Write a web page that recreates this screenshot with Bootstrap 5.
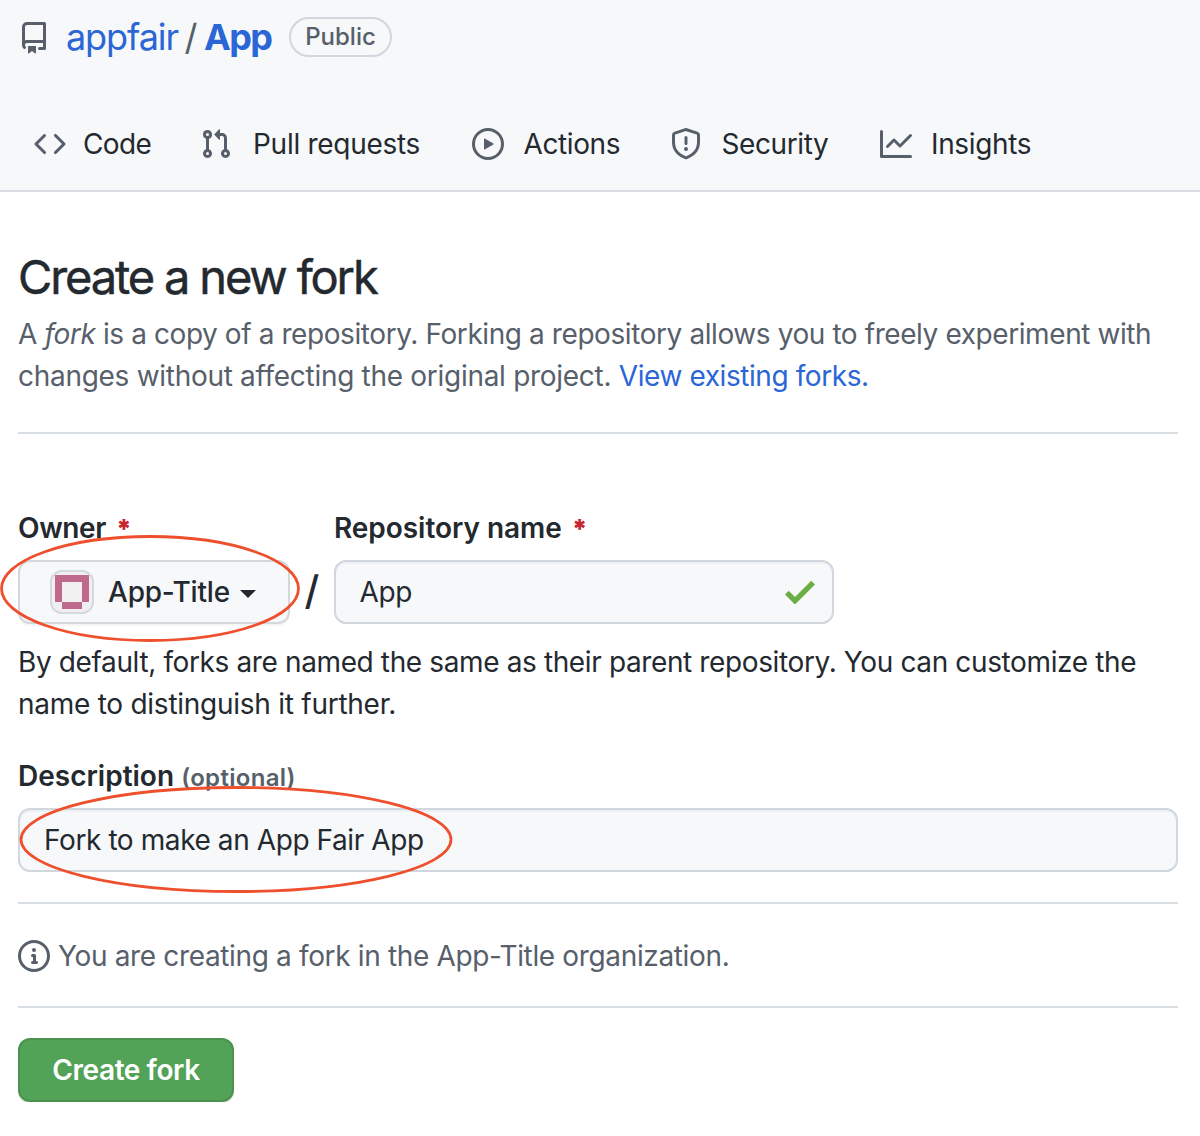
<!DOCTYPE html>
<html lang="en">
<head>
<meta charset="utf-8">
<meta name="viewport" content="width=device-width, initial-scale=1">
<title>Create a new fork</title>
<link href="https://cdn.jsdelivr.net/npm/bootstrap@5.3.0/dist/css/bootstrap.min.css" rel="stylesheet">
<style>
body{font-family:Inter,"Liberation Sans",sans-serif;font-size:28px;line-height:42px;color:#24292f;background:#fff;overflow-x:hidden}
a{color:#2b66d6;text-decoration:none}
svg{display:block;flex:none}
.oct{width:32px;height:32px;fill:#57606a}
.soft{color:#57606a}
.nw{white-space:nowrap}
.repo-head{height:192px;background:#f6f8fa;border-bottom:2px solid #d8dee4}
.repo-title{padding:13px 18px 0;height:61px;font-size:36px;line-height:46px}
.repo-title .oct{margin-top:1px}
.repo-owner{margin-left:16px;width:112px;letter-spacing:-1.1px}
.repo-slash{width:26px;text-align:center}
.repo-name{width:69px;letter-spacing:-1.7px}
.pill{width:103px;height:40px;border:2px solid #d0d7de;border-radius:20px;margin-left:16px;font-size:24px;line-height:35px;font-weight:500}
.tabs{margin-top:62px;height:42px;padding-left:34px}
.tab-item{color:#24292f;gap:17px;letter-spacing:-.4px}
.t1{width:166px;letter-spacing:-.6px}
.t2{width:272px;gap:21px;letter-spacing:-.28px}
.t3{width:198px;gap:19.5px}
.t4{width:210px;gap:19.5px}
.t5{gap:19px;letter-spacing:-.35px}
.main-col{padding:49px 22px 0 18px}
.page-title{font-size:47px;line-height:72px;font-weight:400;letter-spacing:-2.15px;margin:0;-webkit-text-stroke:.5px #24292f}
.rule{height:2px;background:#d8dee4}
.lbl{font-weight:600;height:42px}
.req{color:#c7252f;margin-left:10px;font-weight:900;font-size:26px;letter-spacing:0}
.l1{letter-spacing:-.35px}
.l2{letter-spacing:-.05px}
.opt{font-size:24px;letter-spacing:.3px}
.p1{letter-spacing:-.415px}
.p2{letter-spacing:-.29px}
.p2 a{letter-spacing:-.42px}
.p3{letter-spacing:-.375px}
.p4{letter-spacing:-.26px}
.dt{letter-spacing:-.41px}
.it{margin-left:8px;letter-spacing:-.35px}
.at{letter-spacing:-.4px}
.ot{margin-left:14px;letter-spacing:-.2px}
.field{height:64px;border:2px solid #d0d7de;border-radius:12px;background:#f6f8fa}
.owner-btn{width:272px;padding-left:30px;font-weight:500;border-color:#d5d8da;box-shadow:0 2px 0 rgba(27,31,36,.04)}
.name-field{width:500px;padding:0 17px 0 23.5px;box-shadow:inset 0 2px 0 rgba(208,215,222,.2)}
.desc-field{padding-left:24px;box-shadow:inset 0 2px 0 rgba(208,215,222,.2)}
.sep{width:44px;height:64px;font-size:40px;line-height:61px;font-weight:500}
.caret{border:8px solid transparent;border-top-color:#24292f;border-bottom:0;margin-left:10px;margin-top:3px}
.go{width:216px;height:64px;padding:0;background:#52a257;border:2px solid #4a934f;border-radius:12px;color:#fff;font-size:28px;line-height:42px;font-weight:600;letter-spacing:-.42px;box-shadow:0 2px 0 rgba(27,31,36,.1)}
.ring{position:absolute;pointer-events:none;fill:none;stroke:#ee502e;stroke-width:2.8}
.ring-owner{left:0;top:534px}
.ring-desc{left:18px;top:785px}
</style>
<script src="https://cdn.jsdelivr.net/npm/bootstrap@5.3.0/dist/js/bootstrap.bundle.min.js"></script>
</head>
<body class="position-relative">
<header class="repo-head">
  <div class="repo-title d-flex align-items-center nw">
    <svg class="oct" viewBox="0 0 16 16"><path fill-rule="evenodd" d="M2 2.5A2.5 2.5 0 014.5 0h8.75a.75.75 0 01.75.75v12.5a.75.75 0 01-.75.75h-2.5a.75.75 0 110-1.5h1.75v-2h-8a1 1 0 00-.714 1.7.75.75 0 01-1.072 1.05A2.495 2.495 0 012 11.5v-9zm10.5-1V9h-8c-.356 0-.694.074-1 .208V2.5a1 1 0 011-1h8zM5 12.25v3.25a.25.25 0 00.4.2l1.45-1.087a.25.25 0 01.3 0L8.6 15.7a.25.25 0 00.4-.2v-3.25a.25.25 0 00-.25-.25h-3.5a.25.25 0 00-.25.25z"/></svg>
    <a href="#" class="repo-owner">appfair</a><span class="repo-slash soft">/</span><a href="#" class="repo-name fw-bold">App</a>
    <span class="pill soft text-center">Public</span>
  </div>
  <nav class="tabs d-flex align-items-center nw">
    <a href="#" class="tab-item t1 d-flex align-items-center"><svg class="oct" viewBox="0 0 16 16"><path fill-rule="evenodd" d="M4.72 3.22a.75.75 0 011.06 1.06L2.06 8l3.72 3.72a.75.75 0 11-1.06 1.06L.47 8.53a.75.75 0 010-1.06l4.25-4.25zm6.56 0a.75.75 0 10-1.06 1.06L13.94 8l-3.72 3.72a.75.75 0 101.06 1.06l4.25-4.25a.75.75 0 000-1.06l-4.25-4.25z"/></svg><span>Code</span></a>
    <a href="#" class="tab-item t2 d-flex align-items-center"><svg class="oct" viewBox="0 0 16 16"><path fill-rule="evenodd" d="M7.177 3.073L9.573.677A.25.25 0 0110 .854v4.792a.25.25 0 01-.427.177L7.177 3.427a.25.25 0 010-.354zM3.75 2.5a.75.75 0 100 1.5.75.75 0 000-1.5zm-2.25.75a2.25 2.25 0 113 2.122v5.256a2.251 2.251 0 11-1.5 0V5.372A2.25 2.25 0 011.5 3.25zM11 2.5h-1V4h1a1 1 0 011 1v5.628a2.251 2.251 0 101.5 0V5A2.5 2.5 0 0011 2.5zm1 10.25a.75.75 0 111.5 0 .75.75 0 01-1.5 0zM3.75 12a.75.75 0 100 1.5.75.75 0 000-1.5z"/></svg><span>Pull requests</span></a>
    <a href="#" class="tab-item t3 d-flex align-items-center"><svg class="oct" viewBox="0 0 16 16"><path fill-rule="evenodd" d="M1.5 8a6.5 6.5 0 1113 0 6.5 6.5 0 01-13 0zM8 0a8 8 0 100 16A8 8 0 008 0zM6.379 5.227A.25.25 0 006 5.442v5.117a.25.25 0 00.379.214l4.264-2.559a.25.25 0 000-.428L6.379 5.227z"/></svg><span>Actions</span></a>
    <a href="#" class="tab-item t4 d-flex align-items-center"><svg class="oct" viewBox="0 0 16 16"><path fill-rule="evenodd" d="M7.467.133a1.75 1.75 0 011.066 0l5.25 1.68A1.75 1.75 0 0115 3.48V7c0 1.566-.32 3.182-1.303 4.682-.983 1.498-2.585 2.813-5.032 3.855a1.7 1.7 0 01-1.33 0c-2.447-1.042-4.049-2.357-5.032-3.855C1.32 10.182 1 8.566 1 7V3.48a1.75 1.75 0 011.217-1.667l5.25-1.68zm.61 1.429a.25.25 0 00-.153 0l-5.25 1.68a.25.25 0 00-.174.238V7c0 1.358.275 2.666 1.057 3.86.784 1.194 2.121 2.34 4.366 3.297a.2.2 0 00.154 0c2.245-.956 3.582-2.104 4.366-3.298C13.225 9.666 13.5 8.36 13.5 7V3.48a.25.25 0 00-.174-.237l-5.25-1.68zM9 10.5a1 1 0 11-2 0 1 1 0 012 0zm-.25-5.75a.75.75 0 10-1.5 0v3a.75.75 0 001.5 0v-3z"/></svg><span>Security</span></a>
    <a href="#" class="tab-item t5 d-flex align-items-center"><svg class="oct" viewBox="0 0 16 16"><path fill-rule="evenodd" d="M1.5 1.75a.75.75 0 00-1.5 0v12.5c0 .414.336.75.75.75h14.5a.75.75 0 000-1.5H1.5V1.75zm14.28 2.53a.75.75 0 00-1.06-1.06L10 7.94 7.53 5.47a.75.75 0 00-1.06 0L3.22 8.72a.75.75 0 001.06 1.06L7 7.06l2.47 2.47a.75.75 0 001.06 0l5.25-5.25z"/></svg><span>Insights</span></a>
  </nav>
</header>
<main class="main-col">
  <h1 class="page-title nw">Create a new fork</h1>
  <p class="soft nw mb-0"><span class="p1">A <em>fork</em> is a copy of a repository. Forking a repository allows you to freely experiment with</span><br><span class="p2">changes without affecting the original project. <a href="#">View existing forks.</a></span></p>
  <div class="rule" style="margin-top:35px"></div>
  <form>
    <div class="d-flex nw" style="margin-top:73px">
      <div>
        <div class="lbl"><span class="l1">Owner</span><span class="req">*</span></div>
        <div class="field owner-btn d-flex align-items-center" style="margin-top:11px">
          <svg width="44" height="44" viewBox="0 0 44 44"><rect x="1" y="1" width="42" height="42" rx="11" fill="#f0f0f0" stroke="#d5d9dd" stroke-width="2"/><path fill="#c0698c" fill-rule="evenodd" d="M5 5h34v27h-7v7H12v-7H5zM12 12v20h20V12z"/></svg>
          <span class="ot">App-Title</span><span class="caret"></span>
        </div>
      </div>
      <div class="sep align-self-end text-center">/</div>
      <div>
        <div class="lbl"><span class="l2">Repository name</span><span class="req">*</span></div>
        <div class="field name-field d-flex align-items-center justify-content-between" style="margin-top:11px"><span class="at">App</span><svg width="30" height="24" viewBox="0 3.2 12 9.6"><path fill="#6cae45" d="M12 5l-8 8-4-4 1.5-1.5L4 10l6.5-6.5L12 5z"/></svg></div>
      </div>
    </div>
    <p class="nw mb-0" style="margin-top:17px"><span class="p3">By default, forks are named the same as their parent repository. You can customize the</span><br><span class="p4">name to distinguish it further.</span></p>
    <div class="lbl nw" style="margin-top:30px"><span class="l3">Description</span> <span class="opt soft">(optional)</span></div>
    <div class="field desc-field d-flex align-items-center nw" style="margin-top:11px"><span class="dt">Fork to make an App Fair App</span></div>
    <div class="rule" style="margin-top:30px"></div>
    <div class="soft d-flex align-items-center nw" style="margin-top:31px"><svg class="oct" viewBox="0 0 16 16"><path fill-rule="evenodd" d="M8 1.5a6.5 6.5 0 100 13 6.5 6.5 0 000-13zM0 8a8 8 0 1116 0A8 8 0 010 8zm6.5-.25A.75.75 0 017.25 7h1a.75.75 0 01.75.75v2.75h.25a.75.75 0 010 1.5h-2a.75.75 0 010-1.5h.25v-2h-.25a.75.75 0 01-.75-.75zM8 6a1 1 0 100-2 1 1 0 000 2z"/></svg><span class="it">You are creating a fork in the App-Title organization.</span></div>
    <div class="rule" style="margin-top:29px"></div>
    <button type="button" class="btn go nw" style="margin-top:30px">Create fork</button>
  </form>
</main>
<svg class="ring ring-owner" width="302" height="110" viewBox="0 0 302 110"><ellipse cx="150" cy="54.5" rx="148.5" ry="52"/></svg>
<svg class="ring ring-desc" width="436" height="110" viewBox="0 0 436 110"><ellipse cx="218" cy="54.5" rx="215" ry="52"/></svg>
</body>
</html>
